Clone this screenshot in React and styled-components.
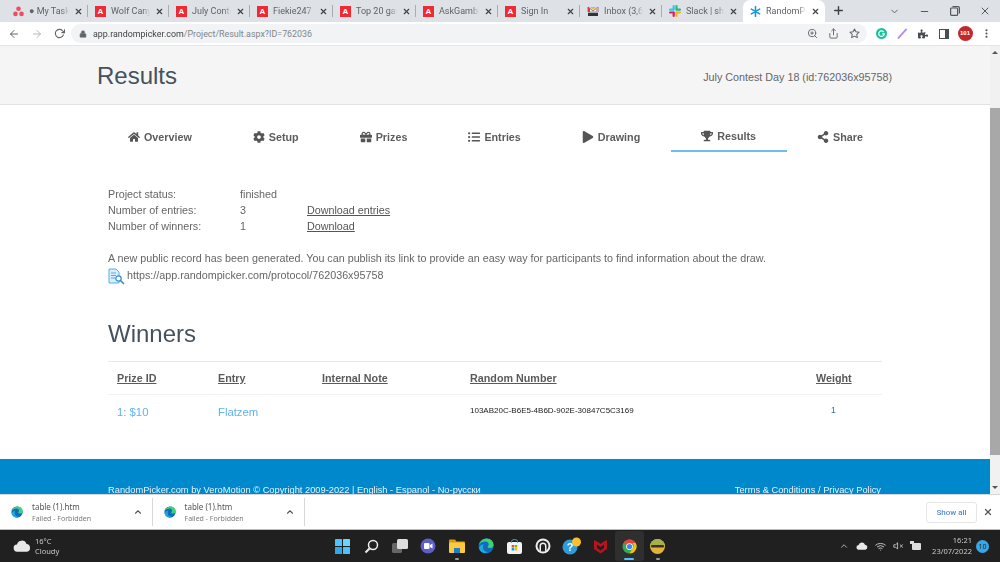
import React from 'react';
import styled, { createGlobalStyle } from 'styled-components';
import { FaHome, FaCog, FaGift, FaListUl, FaPlay, FaTrophy, FaShareAlt, FaPuzzlePiece } from 'react-icons/fa';
import { FiArrowLeft, FiArrowRight, FiRotateCw, FiX, FiPlus, FiMinus, FiChevronDown, FiChevronUp, FiStar, FiShare, FiZoomIn, FiLock, FiMoreVertical, FiVolumeX, FiWifi } from 'react-icons/fi';

const Global = createGlobalStyle`
  html, body { margin: 0; padding: 0; width: 1000px; height: 562px; overflow: hidden; background: #fff; }
  * { box-sizing: border-box; }
  #root { filter: blur(0.5px); }
`;

const Screen = styled.div`
  width: 1000px; height: 562px; display: flex; flex-direction: column; overflow: hidden;
  font-family: "Liberation Sans", Arial, sans-serif;
`;
const TabBar = styled.div`
  height: 22px; background: #dee1e6; display: flex; align-items: stretch; flex: none; position: relative;
  font-family: Roboto, "Noto Sans", sans-serif;
`;
const TabItem = styled.div`
  width: ${p => p.$w || 82}px; flex: none; display: flex; align-items: center; gap: 5px;
  padding: 0 4px 0 ${p => p.$pl || 7}px; position: relative; font-size: 9px; color: #5f6368;
  background: ${p => p.$active ? '#fff' : 'transparent'};
  border-radius: ${p => p.$active ? '7px 7px 0 0' : '0'};
  &::after {
    content: ''; display: ${p => p.$sep ? 'block' : 'none'}; position: absolute; right: 0; top: 5px; height: 12px; width: 1px; background: #a9adb2;
  }
`;
const TabLabel = styled.span`
  flex: 1; min-width: 0; white-space: nowrap; overflow: hidden;
  -webkit-mask-image: linear-gradient(to right, #000 82%, transparent);
  mask-image: linear-gradient(to right, #000 82%, transparent);
`;
const TabClose = styled(FiX)`
  flex: none; width: 9px; height: 9px; color: #3c4043; stroke-width: 3; margin-right: 1px;
`;
const RedFavicon = styled.span`
  flex: none; width: 11px; height: 11px; background: #ee2a35; color: #fff; font: bold 8px/11px "Liberation Sans", sans-serif; text-align: center;
`;
const NewTab = styled(FiPlus)`
  width: 13px; height: 13px; margin: 4px 0 0 7px; color: #3c4043; stroke-width: 2.6;
`;
const WindowControls = styled.div`
  margin-left: auto; display: flex; align-items: center; color: #55585c; width: 111px; justify-content: space-between; padding-right: 9px;
`;
const Toolbar = styled.div`
  height: 24px; flex: none; background: #fff; border-bottom: 1px solid #e4e5e7; display: flex; align-items: center; color: #5f6368;
`;
const NavButtons = styled.div`
  width: 71px; flex: none; display: flex; align-items: center; gap: 11px; padding-left: 8px;
`;
const Omnibox = styled.div`
  width: 796px; height: 19px; flex: none; border-radius: 10px; background: #f1f3f4; display: flex; align-items: center; padding: 0 7px 0 8px; font-family: Roboto, "Noto Sans", sans-serif; font-size: 8.9px; color: #80868b; gap: 6px;
`;
const Domain = styled.span` color: #202124; opacity: .85; `;
const OmniRight = styled.div` margin-left: auto; display: flex; align-items: center; gap: 10px; color: #5f6368; `;
const Extensions = styled.div`
  flex: 1; display: flex; align-items: center; padding-left: 3.5px; color: #4a4d51;
`;
const ExtSlot = styled.span` width: 21px; flex: none; display: flex; align-items: center; justify-content: center; `;
const SidePanelIcon = styled.span`
  width: 10px; height: 10px; border: 1.5px solid #4a4d51; border-right-width: 4px; background: #fff; flex: none;
`;
const Avatar = styled.span`
  width: 15px; height: 15px; border-radius: 50%; background: #c1272d; color: #fff; font: bold 6px/15px "Liberation Sans", sans-serif; text-align: center; flex: none;
`;

const Viewport = styled.div` height: 448px; flex: none; display: flex; `;
const Page = styled.div` flex: 1; min-width: 0; display: flex; flex-direction: column; color: #555; font-size: 10.75px; overflow: hidden; `;
const Scrollbar = styled.div`
  width: 10px; flex: none; background: #f1f1f1; display: flex; flex-direction: column; align-items: center;
`;
const Arrow = styled.span`
  width: 0; height: 0; border-left: 3px solid transparent; border-right: 3px solid transparent; flex: none;
  ${p => p.$up ? 'border-bottom: 3px solid #555; margin-top: 5px;' : 'border-top: 3px solid #555; margin-top: 31px;'}
`;
const Thumb = styled.div` width: 10px; height: 347px; background: #a8a8a8; margin-top: 54px; flex: none; `;

const PageHeader = styled.header`
  height: 59px; flex: none; background: #f5f5f5; border-bottom: 1px solid #e3e3e3; display: flex; align-items: center; justify-content: space-between; padding: 0 98px 0 97px;
`;
const H1 = styled.h1` margin: 2px 0 0; font-weight: 400; font-size: 24px; color: #45525d; `;
const ProjectName = styled.span` font-size: 10.75px; color: #666; margin-top: 4px; `;
const Tabs = styled.nav` display: flex; height: 47px; padding-left: 97.5px; flex: none; `;
const NavTab = styled.div`
  display: flex; align-items: center; gap: 4px; padding: ${p => p.$active ? 16 : 18}px 30.5px 0; height: 47px; font-size: 10.75px; font-weight: 700; color: #5c5c5c; white-space: nowrap;
  border-bottom: 2px solid ${p => p.$active ? '#6dbcf1' : 'transparent'};
  svg { width: 12px; height: 12px; flex: none; color: #555; }
`;
const Info = styled.div`
  margin: 34px 0 0 108px; display: grid; grid-template-columns: 132px 67px auto; grid-auto-rows: 16px; align-items: center; justify-content: start; color: #666;
`;
const TextLink = styled.a` color: #555; text-decoration: underline; `;
const Notice = styled.p` margin: 16px 0 0 108px; line-height: 16px; color: #666; `;
const ProtocolRow = styled.div`
  margin: 1px 0 0 108px; display: flex; align-items: flex-start; gap: 2px; line-height: 16px; height: 16px; color: #666;
  svg { flex: none; margin-top: 1px; }
`;
const H2 = styled.h2` margin: 37px 0 13px 108px; font-size: 24px; line-height: 28px; font-weight: 400; color: #45525d; `;
const Table = styled.div` margin: 0 108px; border-top: 1px solid #e8e8e8; `;
const Row = styled.div`
  display: grid; grid-template-columns: 101px 104px 148px 346px 1fr; padding-left: 9px; align-items: center; height: ${p => p.$h}px;
  border-bottom: ${p => p.$head ? '1px solid #f2f2f2' : 'none'};
`;
const Th = styled.span` font-weight: 700; font-size: 10.75px; color: #5a5a5a; text-decoration: underline; `;
const Blue = styled.span` color: #5fb4ee; font-size: 11.3px; `;
const Uuid = styled.span` color: #222; font-size: 8px; margin-top: -4px; white-space: nowrap; `;
const WeightValue = styled.span` color: #1f6fa8; font-size: 8.5px; margin: -4px 0 0 15px; `;
const Footer = styled.footer`
  margin-top: auto; height: 35px; flex: none; background: #0088cc; color: #e6f4fb; font-size: 9.3px; display: flex; justify-content: space-between; padding: 25px 109px 0 108px; overflow: hidden; white-space: nowrap; line-height: 12px;
`;

const Downloads = styled.div`
  height: 36px; flex: none; background: #fff; border-top: 1px solid #d5d7da; border-bottom: 1px solid #bbb; display: flex; align-items: center; font-family: "Noto Sans", sans-serif;
`;
const DownloadItem = styled.div`
  width: 152.5px; height: 28px; flex: none; display: flex; align-items: center; border-right: 1px solid #d8d8d8; padding: 0 9px 0 11px; gap: 9px;
`;
const DlText = styled.div` flex: 1; display: flex; flex-direction: column; gap: 2px; `;
const DlName = styled.span` font-size: 8px; line-height: 11px; color: #555; `;
const DlStatus = styled.span` font-size: 7px; line-height: 10px; color: #7a7a7a; `;
const ShowAll = styled.div`
  margin-left: auto; width: 51px; height: 21px; border: 1px solid #e6e6e6; border-radius: 3px; color: #5a86d8; font-family: Roboto, sans-serif; font-size: 8px; font-weight: 500; display: flex; align-items: center; justify-content: center; flex: none;
`;
const DlClose = styled(FiX)` width: 10px; height: 10px; stroke-width: 3; color: #555; margin: 0 7px 0 6px; flex: none; `;

const Taskbar = styled.div`
  height: 32px; flex: none; background: #202020; color: #ddd; display: grid; grid-template-columns: 328px auto 1fr auto; align-items: center; font-family: "Noto Sans", sans-serif;
`;
const Weather = styled.div` display: flex; align-items: center; gap: 4px; padding-left: 13px; `;
const WeatherText = styled.div` display: flex; flex-direction: column; font-size: 7.5px; line-height: 10.5px; color: #c9c9c9; `;
const TaskIcons = styled.div` display: flex; align-items: center; `;
const TaskIcon = styled.div`
  width: 28.7px; height: 30px; display: flex; align-items: center; justify-content: center; position: relative; border-radius: 3px; flex: none;
  background: ${p => p.$active ? '#2f2f2f' : 'transparent'};
  &::after {
    content: ''; display: ${p => p.$mark ? 'block' : 'none'}; position: absolute; bottom: 1px; left: 50%; transform: translateX(-50%);
    width: ${p => p.$mark === 'on' ? '10px' : '4px'}; height: 2px; border-radius: 1px; background: ${p => p.$mark === 'on' ? '#4cc2ff' : '#999'};
  }
`;
const Tray = styled.div` grid-column: 4; display: flex; align-items: center; gap: 7px; padding-right: 11px; color: #ccc; `;
const Clock = styled.div` display: flex; flex-direction: column; align-items: flex-end; font-size: 7.5px; line-height: 11px; color: #c9c9c9; margin-left: 4px; `;
const Badge = styled.span` width: 13px; height: 13px; border-radius: 50%; background: #3aa6e6; color: #10273a; font-size: 7px; line-height: 13px; text-align: center; flex: none; margin-left: -3px; `;

const Asana = () => <svg width="11" height="11" viewBox="0 0 12 12"><g fill="#ea4e5f"><circle cx="6" cy="3" r="2.5"/><circle cx="2.7" cy="8.6" r="2.5"/><circle cx="9.3" cy="8.6" r="2.5"/></g></svg>;
const Gmail = () => <svg width="12" height="12" viewBox="0 0 12 12"><path d="M1 2l5 4 5-4v5H1z" fill="#fff" stroke="#333" strokeWidth=".6"/><path d="M1 2l2 1.6V7H1z" fill="#e33"/><path d="M11 2L9 3.6V7h2z" fill="#e9a"/><path d="M3 2l3 2.4L9 2z" fill="#f3b32c"/><rect x="1" y="8" width="10" height="3" fill="#333"/></svg>;
const Slack = () => <svg width="12" height="12" viewBox="0 0 12 12"><rect x="3.6" y="0" width="2.2" height="5.4" rx="1.1" fill="#36c5f0"/><rect x="0" y="3.6" width="5.4" height="2.2" rx="1.1" fill="#36c5f0"/><rect x="6.4" y="0" width="2.2" height="5.4" rx="1.1" fill="#2eb67d"/><rect x="6.6" y="3.6" width="5.4" height="2.2" rx="1.1" fill="#2eb67d"/><rect x="6.4" y="6.6" width="2.2" height="5.4" rx="1.1" fill="#ecb22e"/><rect x="6.6" y="6.4" width="5.4" height="2.2" rx="1.1" fill="#ecb22e"/><rect x="3.6" y="6.6" width="2.2" height="5.4" rx="1.1" fill="#e01e5a"/><rect x="0" y="6.4" width="5.4" height="2.2" rx="1.1" fill="#e01e5a"/></svg>;
const Picker = () => <svg width="11" height="11" viewBox="0 0 12 12" stroke="#1a95d8" strokeWidth="1.7" strokeLinecap="round"><path d="M6 .8v10.4M1.5 3.4l9 5.2M10.5 3.4l-9 5.2"/></svg>;
const Edge = ({ s = 12 }) => <svg width={s} height={s} viewBox="0 0 16 16"><circle cx="8" cy="8" r="7.5" fill="#0f6cbd"/><path d="M1 7C2 2.5 6 .5 9 .5c4 0 6.6 3 6.6 6.6 0 2-1.6 3-3.3 3-1.4 0-2.6-.5-2.6-1.2 0-1.2 1-1 1-2.6C10.700 4.500 8.800 3.200 6.500 3.500 4 3.800 2 5 1 7z" fill="#3fd07c"/><path d="M5 9.500C5 12 7 14 10 14c-3 2-8 1-9-4 1-3 3-3.800 4.500-3.800C5.100 7.500 5 8.500 5 9.500z" fill="#1fa8e0"/></svg>;
const Chrome = () => <svg width="15" height="15" viewBox="0 0 16 16"><circle cx="8" cy="8" r="7.500" fill="#34a853"/><path d="M8 .5a7.500 7.500 0 0 1 6.500 3.750H8A3.750 3.750 0 0 0 4.600 6.400L2 3.400A7.500 7.500 0 0 1 8 .5z" fill="#ea4335"/><path d="M14.500 4.250A7.500 7.500 0 0 1 8 15.500l3.200-5.600a3.750 3.750 0 0 0 0-5.650z" fill="#fbbc05"/><circle cx="8" cy="8" r="3.600" fill="#fff"/><circle cx="8" cy="8" r="2.800" fill="#4285f4"/></svg>;
const Cloud = ({ w = 18, c = '#e8e8e8' }) => <svg width={w} height={w * .65} viewBox="0 0 20 13"><path d="M5 13a4 4 0 0 1-.6-8A5.500 5.500 0 0 1 15 4.500 4.300 4.300 0 0 1 15.500 13z" fill={c}/></svg>;
const Win = () => <svg width="15" height="15" viewBox="0 0 15 15"><g fill="#4cc2ff"><rect width="7" height="7" rx=".6"/><rect x="8" width="7" height="7" rx=".6" fill="#6fd3ff"/><rect y="8" width="7" height="7" rx=".6" fill="#2fa8e8"/><rect x="8" y="8" width="7" height="7" rx=".6"/></g></svg>;
const SearchI = () => <svg width="15" height="15" viewBox="0 0 15 15" fill="none" stroke="#eee" strokeWidth="1.500"><circle cx="9" cy="6" r="4.500"/><path d="M5.500 9.500L1.500 13.500" strokeWidth="2"/></svg>;
const TaskView = () => <svg width="16" height="14" viewBox="0 0 16 14"><rect y="4" width="10" height="10" rx="1.500" fill="#666"/><rect x="5" width="11" height="10" rx="1.500" fill="#ddd"/></svg>;
const Meet = () => <svg width="16" height="16" viewBox="0 0 16 16"><circle cx="8" cy="8" r="7.500" fill="#5b5fc7"/><rect x="4" y="5" width="5.500" height="6" rx="1" fill="#fff"/><path d="M10 7l2.500-1.500v5L10 9z" fill="#fff"/></svg>;
const Folder = () => <svg width="16" height="14" viewBox="0 0 16 14"><path d="M0 1.500A1 1 0 0 1 1 .5h5l1.500 2H15a1 1 0 0 1 1 1V4H0z" fill="#d89a12"/><rect y="3.500" width="16" height="10.500" rx="1" fill="#fcc93f"/><rect x="5" y="9" width="6" height="5" fill="#1b7fd0"/></svg>;
const Store = () => <svg width="15" height="15" viewBox="0 0 15 15"><rect y="3" width="15" height="12" rx="2" fill="#f3f3f3"/><path d="M4.500 4V2.500a3 2 0 0 1 6 0V4" fill="none" stroke="#4aa3dc" strokeWidth="1"/><rect x="4.700" y="6" width="2.500" height="2.500" fill="#f25022"/><rect x="7.700" y="6" width="2.500" height="2.500" fill="#7fba00"/><rect x="4.700" y="9" width="2.500" height="2.500" fill="#00a4ef"/><rect x="7.700" y="9" width="2.500" height="2.500" fill="#ffb900"/></svg>;
const Ring = () => <svg width="16" height="16" viewBox="0 0 16 16"><circle cx="8" cy="8" r="7.500" fill="#eee"/><circle cx="8" cy="8" r="5.500" fill="#222"/><path d="M4.500 13V8a3.500 3.500 0 0 1 7 0v5h-1.500V8a2 2 0 0 0-4 0v5z" fill="#eee"/></svg>;
const Help = () => <svg width="20" height="18" viewBox="0 0 20 18"><circle cx="8" cy="10" r="7.500" fill="#2d9cdb"/><text x="8" y="14" textAnchor="middle" fontSize="11" fontWeight="700" fill="#fff" fontFamily="Liberation Sans">?</text><circle cx="14.500" cy="5" r="4.500" fill="#fbc02d"/></svg>;
const McAfee = () => <svg width="15" height="15" viewBox="0 0 15 15"><path d="M1 1l4 2 2.500 2L10 3l4-2v9l-6.500 4.500L1 10z" fill="#b5161e"/><path d="M4 5.500l3.500 2.500L11 5.500V9l-3.500 2.500L4 9z" fill="#202020"/></svg>;
const Hat = () => <svg width="15" height="15" viewBox="0 0 15 15"><circle cx="7.500" cy="7.500" r="7.500" fill="#e4b23a"/><path d="M0 7.500A7.500 7.500 0 0 1 15 7.500z" fill="#a8b04a"/><rect x="1" y="6" width="13" height="2.500" rx="1.200" fill="#3a3320"/></svg>;
const DocSearch = () => <svg width="17" height="17" viewBox="0 0 17 17" fill="none"><path d="M1 1h7l3 3v11H1z" fill="#d8eefb" stroke="#55aee6"/><path d="M3 5h5M3 7.500h5M3 10h4" stroke="#55aee6"/><circle cx="10.500" cy="10.500" r="2.700" fill="#fff" stroke="#2f8ccc" strokeWidth="1.200"/><path d="M12.500 12.500l3.500 3.500" stroke="#2f8ccc" strokeWidth="1.600"/></svg>;

const tabs = [
  { label: '● My Tasks', icon: <Asana />, w: 88, pl: 13 },
  { label: 'Wolf Canyon', w: 81 }, { label: 'July Contest', w: 81 }, { label: 'Fiekie247 - A', w: 83 },
  { label: 'Top 20 games', w: 83 }, { label: 'AskGamble', w: 82 }, { label: 'Sign In', w: 82 },
  { label: 'Inbox (3,605)', icon: <Gmail />, w: 82 }, { label: 'Slack | share', icon: <Slack />, w: 81, sep: false },
  { label: 'RandomPicker', icon: <Picker />, w: 82, active: true },
];
const navItems = [
  [FaHome, 'Overview'], [FaCog, 'Setup'], [FaGift, 'Prizes'], [FaListUl, 'Entries'], [FaPlay, 'Drawing'], [FaTrophy, 'Results', true], [FaShareAlt, 'Share'],
];
const taskIcons = [
  [<Win />], [<SearchI />], [<TaskView />], [<Meet />], [<Folder />, 'off'], [<Edge s={16} />], [<Store />], [<Ring />], [<Help />], [<McAfee />], [<Chrome />, 'on', true], [<Hat />, 'off'],
];

export default function App() {
  return (
    <Screen>
      <Global />
      <TabBar>
        {tabs.map((t, i) => (
          <TabItem key={i} $w={t.w} $pl={t.pl} $active={t.active} $sep={i < 8 && t.sep !== false}>
            {t.icon || <RedFavicon>A</RedFavicon>}
            <TabLabel>{t.label}</TabLabel>
            <TabClose />
          </TabItem>
        ))}
        <NewTab />
        <WindowControls>
          <FiChevronDown size={11} />
          <FiMinus size={11} strokeWidth={2.5} />
          <svg width="10" height="10" viewBox="0 0 10 10" fill="none" stroke="#55585c" strokeWidth="1.200"><rect x=".6" y="2" width="7" height="7.400" rx="1"/><path d="M2.500 .6h5.500a1.400 1.400 0 0 1 1.400 1.400v5.500"/></svg>
          <FiX size={12} />
        </WindowControls>
      </TabBar>
      <Toolbar>
        <NavButtons>
          <FiArrowLeft size={12} />
          <FiArrowRight size={12} color="#b5b7ba" />
          <FiRotateCw size={11} strokeWidth={2.4} />
        </NavButtons>
        <Omnibox>
          <FiLock size={8} fill="#5f6368" />
          <span><Domain>app.randompicker.com</Domain>/Project/Result.aspx?ID=762036</span>
          <OmniRight>
            <FiZoomIn size={11} />
            <FiShare size={11} />
            <FiStar size={11} strokeWidth={2.2} />
          </OmniRight>
        </Omnibox>
        <Extensions>
          <ExtSlot><svg width="11" height="11" viewBox="0 0 12 12"><circle cx="6" cy="6" r="6" fill="#15c39a"/><path d="M8.500 4.500A3 3 0 1 0 9 6.500H6.800" fill="none" stroke="#fff" strokeWidth="1.300"/></svg></ExtSlot>
          <ExtSlot><svg width="11" height="11" viewBox="0 0 12 12"><path d="M1 11.500L10.500 1" stroke="#b48ce6" strokeWidth="2"/></svg></ExtSlot>
          <ExtSlot><FaPuzzlePiece size={10} /></ExtSlot>
          <ExtSlot><SidePanelIcon /></ExtSlot>
          <ExtSlot><Avatar>101</Avatar></ExtSlot>
          <ExtSlot><FiMoreVertical size={11} strokeWidth={2.6} /></ExtSlot>
        </Extensions>
      </Toolbar>
      <Viewport>
        <Page>
          <PageHeader>
            <H1>Results</H1>
            <ProjectName>July Contest Day 18 (id:762036x95758)</ProjectName>
          </PageHeader>
          <Tabs>
            {navItems.map(([Icon, label, active]) => (
              <NavTab key={label} $active={active}><Icon />{label}</NavTab>
            ))}
          </Tabs>
          <Info>
            <span>Project status:</span><span>finished</span><span />
            <span>Number of entries:</span><span>3</span><TextLink>Download entries</TextLink>
            <span>Number of winners:</span><span>1</span><TextLink>Download</TextLink>
          </Info>
          <Notice>A new public record has been generated. You can publish its link to provide an easy way for participants to find information about the draw.</Notice>
          <ProtocolRow><DocSearch />https://app.randompicker.com/protocol/762036x95758</ProtocolRow>
          <H2>Winners</H2>
          <Table>
            <Row $head $h={33}>
              <Th>Prize ID</Th><Th>Entry</Th><Th>Internal Note</Th><Th>Random Number</Th><Th>Weight</Th>
            </Row>
            <Row $h={34}>
              <Blue>1: $10</Blue><Blue>Flatzem</Blue><span /><Uuid>103AB20C-B6E5-4B6D-902E-30847C5C3169</Uuid><WeightValue>1</WeightValue>
            </Row>
          </Table>
          <Footer>
            <span>RandomPicker.com by VeroMotion © Copyright 2009-2022 | English - Espanol - No-русски</span>
            <span>Terms &amp; Conditions / Privacy Policy</span>
          </Footer>
        </Page>
        <Scrollbar>
          <Arrow $up />
          <Thumb />
          <Arrow />
        </Scrollbar>
      </Viewport>
      <Downloads>
        {[0, 1].map(i => (
          <DownloadItem key={i}>
            <Edge />
            <DlText><DlName>table (1).htm</DlName><DlStatus>Failed - Forbidden</DlStatus></DlText>
            <FiChevronUp size={10} strokeWidth={2.6} color="#555" />
          </DownloadItem>
        ))}
        <ShowAll>Show all</ShowAll>
        <DlClose />
      </Downloads>
      <Taskbar>
        <Weather>
          <Cloud />
          <WeatherText><span>16°C</span><span>Cloudy</span></WeatherText>
        </Weather>
        <TaskIcons>
          {taskIcons.map(([icon, mark, active], i) => (
            <TaskIcon key={i} $mark={mark} $active={active}>{icon}</TaskIcon>
          ))}
        </TaskIcons>
        <Tray>
          <FiChevronUp size={10} />
          <Cloud w={12} />
          <FiWifi size={11} />
          <FiVolumeX size={10} />
          <svg width="11" height="10" viewBox="0 0 11 10"><rect x="2" y="2" width="9" height="7" rx="1" fill="#ddd"/><rect y="0" width="4" height="3" fill="#ddd"/></svg>
          <Clock><span>16:21</span><span>23/07/2022</span></Clock>
          <Badge>10</Badge>
        </Tray>
      </Taskbar>
    </Screen>
  );
}
